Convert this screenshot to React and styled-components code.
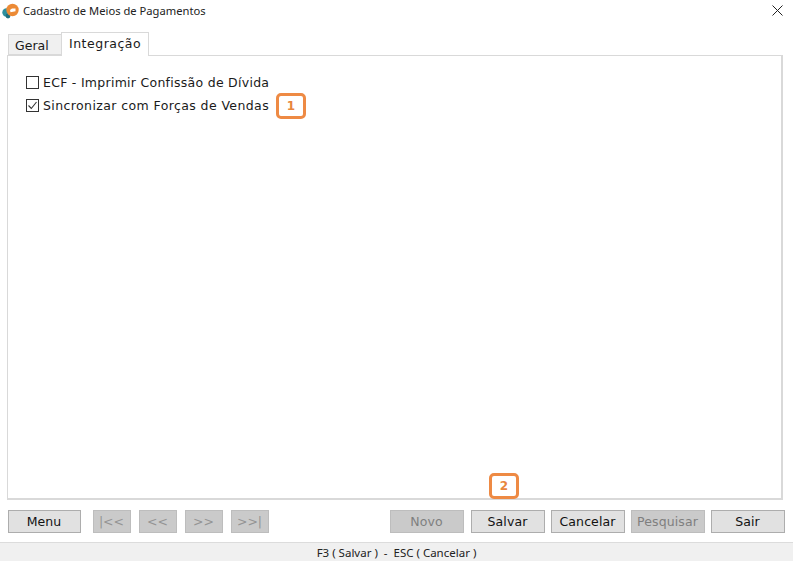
import React from "react";
import styled, { createGlobalStyle } from "styled-components";

const GlobalStyle = createGlobalStyle`
  html, body {
    margin: 0;
    padding: 0;
    background: #fff;
  }
`;

const Window = styled.div`
  position: relative;
  width: 793px;
  height: 561px;
  overflow: hidden;
  background: #fff;
  display: flex;
  flex-direction: column;
  font-family: "DejaVu Sans", Verdana, sans-serif;
  color: #1a1a1a;
`;

const TitleBar = styled.div`
  height: 21px;
  flex: none;
  display: flex;
  align-items: center;
  padding: 0 10px 0 2px;
  gap: 4px;
`;

const Title = styled.div`
  flex: 1;
  font-family: "Noto Sans", "Open Sans", sans-serif;
  font-size: 11.2px;
  color: #222;
`;

const Tabs = styled.div`
  flex: none;
  height: 23px;
  margin-top: 11px;
  padding-left: 8px;
  display: flex;
  align-items: flex-end;
  position: relative;
  z-index: 1;
`;

const Tab = styled.div`
  box-sizing: border-box;
  font-size: 12.5px;
  border: 1px solid #d9d9d9;
  ${({ $active }) =>
    $active
      ? `
    width: 88px;
    height: 24px;
    background: #fff;
    border-bottom: none;
    padding: 3px 0 0 7px;
    margin-bottom: -1px;
    letter-spacing: 0.5px;
  `
      : `
    width: 53px;
    height: 21px;
    background: #f0f0f0;
    border-right: none;
    padding: 3px 0 0 6px;
  `}
`;

const Panel = styled.div`
  box-sizing: border-box;
  flex: none;
  width: 776px;
  height: 445px;
  margin-left: 7px;
  border: 1px solid #d9d9d9;
  border-right-width: 2px;
  border-bottom-width: 2px;
  padding: 17px 0 0 18px;
  display: flex;
  flex-direction: column;
  gap: 5px;
`;

const CheckRow = styled.label`
  display: flex;
  align-items: center;
  gap: 4px;
  height: 18px;
  font-size: 12.5px;
  letter-spacing: ${({ $tracking }) => $tracking}px;
  white-space: nowrap;
`;

const CheckBox = styled.span`
  box-sizing: border-box;
  width: 13px;
  height: 13px;
  flex: none;
  border: 1px solid #333;
  background: #fff;
  display: flex;
  align-items: center;
  justify-content: center;
`;

const Footer = styled.div`
  flex: none;
  height: 23px;
  margin-top: 10px;
  padding: 0 8px;
  display: flex;
  gap: 6px;
`;

const Button = styled.div`
  box-sizing: border-box;
  width: ${({ $width }) => $width || 74}px;
  height: 23px;
  margin-left: ${({ $gap }) => $gap || 0}px;
  padding-right: 1px;
  display: flex;
  align-items: center;
  justify-content: center;
  font-size: 12.5px;
  letter-spacing: ${({ $nav }) => ($nav ? "0" : "0.1px")};
  white-space: nowrap;
  border: 1px solid ${({ $disabled }) => ($disabled ? "#bdbdbd" : "#adadad")};
  background: ${({ $disabled }) => ($disabled ? "#cacaca" : "#e1e1e1")};
  color: ${({ $disabled, $nav }) => ($nav ? "#949494" : $disabled ? "#7f7f7f" : "#111")};
`;

const StatusBar = styled.div`
  flex: none;
  box-sizing: border-box;
  height: 19px;
  margin-top: 9px;
  background: #f0f0f0;
  border-top: 1px solid #dcdcdc;
  display: flex;
  align-items: center;
  justify-content: center;
  font-family: "Noto Sans", "Open Sans", sans-serif;
  font-size: 11.5px;
  color: #222;
  white-space: pre;
`;

const Marker = styled.div`
  position: absolute;
  left: ${({ $x }) => $x}px;
  top: ${({ $y }) => $y}px;
  box-sizing: border-box;
  width: 30px;
  height: 26px;
  border: 3px solid #ee8a44;
  border-radius: 5px;
  background: #fff;
  color: #e8853d;
  font-size: 12px;
  font-weight: bold;
  display: flex;
  align-items: center;
  justify-content: center;
`;

const AppIcon = () => (
  <svg width="17" height="17" viewBox="0 0 17 17">
    <circle cx="4.5" cy="10.5" r="4.2" fill="#2f8f9d" />
    <circle cx="6" cy="14" r="2.4" fill="#1f6f7d" />
    <circle cx="10.5" cy="8" r="6.2" fill="#ec8a35" />
    <path d="M8 8 L10 6.5 L13.5 6.5 L13.5 9.3 L8.5 10.3 Z" fill="#fff" />
  </svg>
);

const CloseIcon = () => (
  <svg width="11" height="11" viewBox="0 0 11 11">
    <path d="M0.5 0.5 L10.5 10.5 M10.5 0.5 L0.5 10.5" stroke="#222" strokeWidth="1" fill="none" />
  </svg>
);

const CheckMark = () => (
  <svg width="11" height="11" viewBox="0 0 11 11">
    <path d="M1.5 5.5 L4.3 8.5 L9.5 2" stroke="#333" strokeWidth="1.1" fill="none" />
  </svg>
);

const navButtons = ["|<<", "<<", ">>", ">>|"];

const App = () => (
  <>
    <GlobalStyle />
    <Window>
      <TitleBar>
        <AppIcon />
        <Title>Cadastro de Meios de Pagamentos</Title>
        <CloseIcon />
      </TitleBar>
      <Tabs>
        <Tab>Geral</Tab>
        <Tab $active>Integração</Tab>
      </Tabs>
      <Panel>
        <CheckRow $tracking={0.27}>
          <CheckBox />
          ECF - Imprimir Confissão de Dívida
        </CheckRow>
        <CheckRow $tracking={0.4}>
          <CheckBox>
            <CheckMark />
          </CheckBox>
          Sincronizar com Forças de Vendas
        </CheckRow>
      </Panel>
      <Footer>
        <Button $width={73}>Menu</Button>
        {navButtons.map((label, index) => (
          <Button key={label} $nav $disabled $width={38} $gap={index === 0 ? 6 : 2}>
            {label}
          </Button>
        ))}
        <Button $disabled $gap={115}>Novo</Button>
        <Button $gap={1}>Salvar</Button>
        <Button>Cancelar</Button>
        <Button $disabled>Pesquisar</Button>
        <Button>Sair</Button>
      </Footer>
      <StatusBar>F3 ( Salvar )  -  ESC ( Cancelar )</StatusBar>
      <Marker $x={276} $y={93}>1</Marker>
      <Marker $x={489} $y={473}>2</Marker>
    </Window>
  </>
);

export default App;
